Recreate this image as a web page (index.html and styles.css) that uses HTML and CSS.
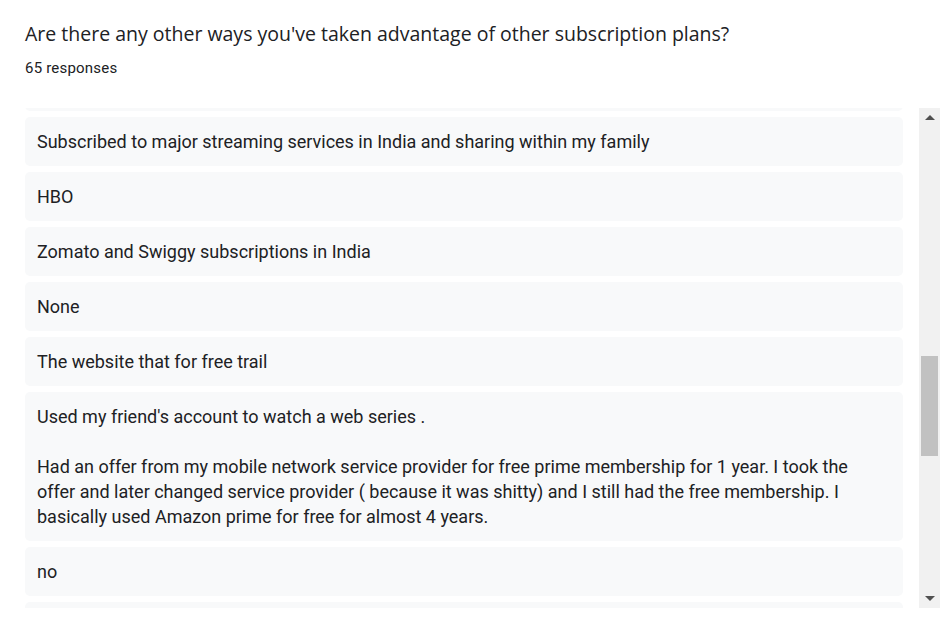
FILE: index.html
```html
<!DOCTYPE html>
<html>
<head>
<meta charset="utf-8">
<link rel="stylesheet" href="styles.css">
</head>
<body>
<div class="page">
  <div class="head">
    <div class="title">Are there any other ways you've taken advantage of other subscription plans?</div>
    <div class="count">65 responses</div>
  </div>
  <div class="panel">
    <div class="list">
      <div class="list-inner">
        <div class="card card-empty"></div>
        <div class="card">Subscribed to major streaming services in India and sharing within my family</div>
        <div class="card">HBO</div>
        <div class="card">Zomato and Swiggy subscriptions in India</div>
        <div class="card">None</div>
        <div class="card">The website that for free trail</div>
        <div class="card">Used my friend's account to watch a web series .<br><br>Had an offer from my mobile network service provider for free prime membership for 1 year. I took the<br>offer and later changed service provider ( because it was shitty) and I still had the free membership. I<br>basically used Amazon prime for free for almost 4 years.</div>
        <div class="card">no</div>
        <div class="card card-empty"></div>
      </div>
    </div>
    <div class="scrollbar">
      <div class="arrow arrow-up"></div>
      <div class="track">
        <div class="thumb"></div>
      </div>
      <div class="arrow arrow-down"></div>
    </div>
  </div>
</div>
</body>
</html>
```

FILE: styles.css
```css
html, body {
  margin: 0;
  padding: 0;
  background: #ffffff;
}
.page {
  padding: 21px 6px 0 25px;
  font-family: Roboto, "Liberation Sans", Arial, sans-serif;
  color: #202124;
}
.head {
  display: flex;
  flex-direction: column;
}
.title {
  font-family: "Open Sans", Roboto, sans-serif;
  font-size: 19.5px;
  line-height: 26px;
  color: #202124;
}
.count {
  margin-top: 11px;
  font-size: 15px;
  line-height: 20px;
  letter-spacing: 0.2px;
}
.panel {
  margin-top: 30px;
  height: 500px;
  display: flex;
  flex-direction: row;
}
.list {
  flex: 1;
  overflow: hidden;
  padding-right: 16px;
}
.list-inner {
  display: flex;
  flex-direction: column;
  gap: 6px;
  margin-top: -46px;
}
.card {
  background: #f8f9fa;
  border-radius: 5px;
  padding: 12px 12px;
  font-size: 18px;
  line-height: 25px;
  color: #202124;
  white-space: nowrap;
}
.card-empty {
  height: 25px;
}
.scrollbar {
  width: 21px;
  background: #f1f1f1;
  display: flex;
  flex-direction: column;
  align-items: center;
}
.arrow {
  width: 21px;
  height: 21px;
  display: flex;
  justify-content: center;
  align-items: center;
}
.arrow-up::before {
  content: "";
  border-left: 5px solid transparent;
  border-right: 5px solid transparent;
  border-bottom: 5px solid #505050;
  margin-top: -2px;
}
.arrow-down::before {
  content: "";
  border-left: 5px solid transparent;
  border-right: 5px solid transparent;
  border-top: 5px solid #505050;
  margin-top: 2px;
}
.track {
  flex: 1;
  width: 100%;
  display: flex;
  flex-direction: column;
  align-items: center;
}
.thumb {
  margin-top: 227px;
  width: 17px;
  height: 100px;
  background: #c1c1c1;
}
```
